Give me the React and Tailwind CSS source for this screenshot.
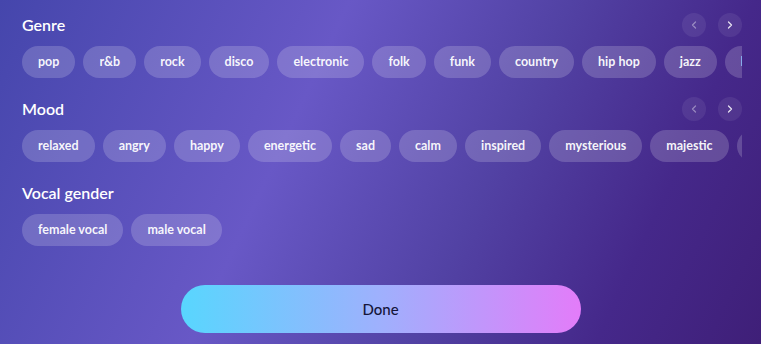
import { ChevronLeft, ChevronRight } from "lucide-react"

const genres = ["pop", "r&b", "rock", "disco", "electronic", "folk", "funk", "country", "hip hop", "jazz", "latin", "metal"]
const moods = ["relaxed", "angry", "happy", "energetic", "sad", "calm", "inspired", "mysterious", "majestic", "romantic", "dark"]
const vocals = ["female vocal", "male vocal"]

function Section({ title, items, arrows }) {
  return (
    <div className="flex flex-col gap-[9px]">
      <div className="flex items-center justify-between h-6">
        <h3 className="text-[16px] font-semibold text-white leading-none">{title}</h3>
        {arrows && (
          <div className="flex items-center gap-3">
            <button className="w-6 h-6 rounded-full bg-white/[0.07] flex items-center justify-center text-white/40">
              <ChevronLeft size={12} strokeWidth={2.5} />
            </button>
            <button className="w-6 h-6 rounded-full bg-white/[0.07] flex items-center justify-center text-white/85">
              <ChevronRight size={12} strokeWidth={2.5} />
            </button>
          </div>
        )}
      </div>
      <div className="flex gap-2 overflow-hidden">
        {items.map(item => (
          <span
            key={item}
            className="shrink-0 h-8 px-4 rounded-full bg-white/[0.18] text-white/95 text-[12.5px] font-bold flex items-center whitespace-nowrap"
          >
            {item}
          </span>
        ))}
      </div>
    </div>
  )
}

export default function App() {
  return (
    <div
      className="w-[761px] h-[344px] overflow-hidden bg-[linear-gradient(115deg,#4546ac_0%,#6858c6_38%,#5242a4_62%,#45288a_82%,#3f1f78_100%)] pt-[13px] pl-[22px] pr-[19px]"
      style={{ fontFamily: "Lato, 'Noto Sans', sans-serif" }}
    >
      <div className="flex flex-col gap-[19px]">
        <Section title="Genre" items={genres} arrows />
        <Section title="Mood" items={moods} arrows />
        <Section title="Vocal gender" items={vocals} />
      </div>
      <div className="flex justify-center mt-[39px] pr-[3px]">
        <button className="w-[400px] h-12 rounded-full bg-[linear-gradient(90deg,#58d6fe_0%,#9fb0fd_50%,#e37cf9_100%)] text-[#15153a] text-[15px] font-medium">
          Done
        </button>
      </div>
    </div>
  )
}
